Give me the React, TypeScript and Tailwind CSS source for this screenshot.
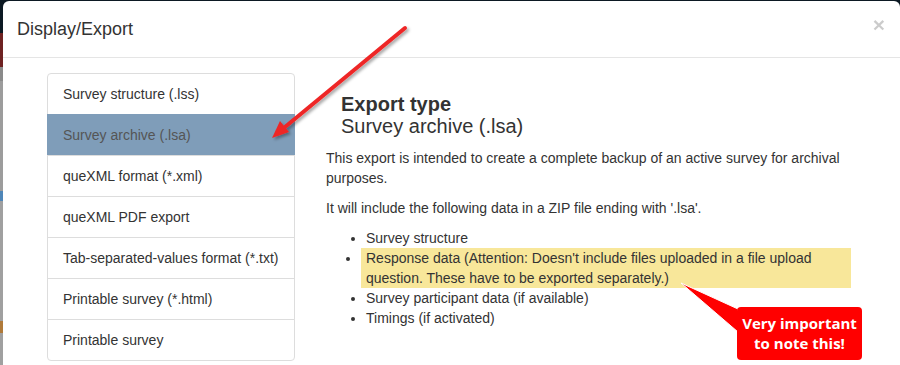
const exportTypes = [
  "Survey structure (.lss)",
  "Survey archive (.lsa)",
  "queXML format (*.xml)",
  "queXML PDF export",
  "Tab-separated-values format (*.txt)",
  "Printable survey (*.html)",
  "Printable survey",
];

const SELECTED = 1;

export default function App() {
  return (
    <div className="relative flex h-[365px] w-[900px] overflow-hidden bg-[#0c1923] font-['Liberation_Sans',Arial,sans-serif] text-[#333]">
      {/* page behind the modal backdrop */}
      <div className="flex w-[3px] flex-col">
        <div className="h-[33px] bg-[#0c1923]" />
        <div className="h-[34px] bg-[#6e2222]" />
        <div className="h-[14px] bg-[#8a8a8a]" />
        <div className="h-[110px] bg-[#9c9c9c]" />
        <div className="h-[10px] bg-[#4f86b8]" />
        <div className="h-[120px] bg-[#a0a0a0]" />
        <div className="h-[12px] bg-[#b07a3a]" />
        <div className="flex-1 bg-[#a0a0a0]" />
      </div>

      {/* Modal */}
      <div className="mt-[1px] flex flex-1 flex-col rounded-t-[6px] bg-white">
        <div className="flex items-start justify-between border-b border-[#e5e5e5] px-[14px] py-[15px]">
          <h4 className="text-[18px] leading-[26px] text-[#333]">Display/Export</h4>
          <button className="-mt-[2px] mr-px text-[21px] font-bold leading-none text-black opacity-20">
            ×
          </button>
        </div>

        <div className="flex pt-[15px]">
          {/* export type list */}
          <div className="ml-[44px] flex w-[248px] flex-col">
            {exportTypes.map((t, i) => (
              <div
                key={t}
                className={
                  "-mb-px border px-[15px] py-[10px] text-[14px] leading-5 " +
                  (i === 0 ? "rounded-t-[4px] " : "") +
                  (i === exportTypes.length - 1 ? "rounded-b-[4px] " : "") +
                  (i === SELECTED
                    ? "border-[#7f9db9] bg-[#7f9db9] text-[#555]"
                    : "border-[#ddd] bg-white text-[#333]")
                }
              >
                {t}
              </div>
            ))}
          </div>

          {/* description */}
          <div className="ml-[31px] w-[525px]">
            <div className="mt-[20px] pl-[15px] text-[20px] leading-[22px]">
              <div className="font-bold">Export type</div>
              <div>Survey archive (.lsa)</div>
            </div>
            <p className="mt-[11px] text-[14px] leading-5">
              This export is intended to create a complete backup of an active survey for archival
              purposes.
            </p>
            <p className="mt-[10px] text-[14px] leading-5">
              It will include the following data in a ZIP file ending with '.lsa'.
            </p>
            <ul className="mt-[10px] list-disc pl-[40px] text-[14px] leading-5">
              <li>Survey structure</li>
              <li className="-ml-[5px] bg-[#f8e79a] pl-[5px]">
                Response data (Attention: Doesn't include files uploaded in a file upload question.
                These have to be exported separately.)
              </li>
              <li>Survey participant data (if available)</li>
              <li>Timings (if activated)</li>
            </ul>
          </div>
        </div>
      </div>

      {/* annotation arrow */}
      <svg className="pointer-events-none absolute left-0 top-0" width="900" height="365">
        <defs>
          <filter id="arrowShadow" x="-20%" y="-20%" width="140%" height="140%">
            <feDropShadow dx="2" dy="2" stdDeviation="1.5" floodColor="#000" floodOpacity="0.35" />
          </filter>
        </defs>
        <g filter="url(#arrowShadow)">
          <line x1="405" y1="28" x2="285" y2="127" stroke="#ee2626" strokeWidth="4" strokeLinecap="round" />
          <polygon points="272,138 289,132 280,121" fill="#ee2626" />
        </g>
        {/* callout tail */}
        <polygon points="738,309 681,283 738,332" fill="#ff0000" stroke="#fff" strokeWidth="1" strokeLinejoin="round" />
      </svg>

      {/* callout */}
      <div className="absolute left-[737px] top-[307px] h-[53px] w-[125px] rounded-[4px] bg-[#ff0000] pt-[6px] text-center font-['Open_Sans',sans-serif] text-[15px] font-bold leading-5 text-white">
        Very important
        <br />
        to note this!
      </div>
    </div>
  );
}
